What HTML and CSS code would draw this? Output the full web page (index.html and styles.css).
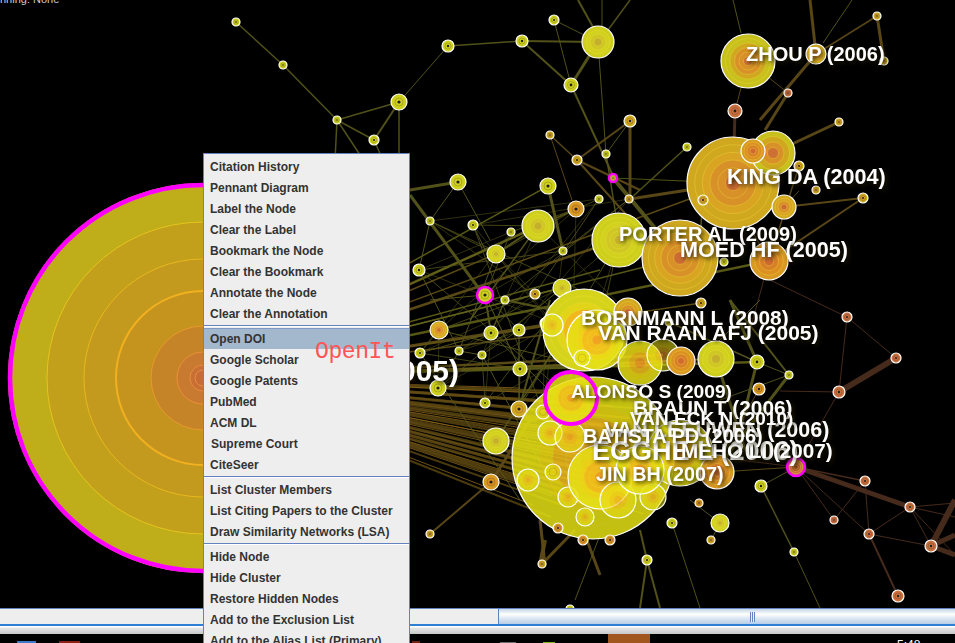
FILE: index.html
```html
<!DOCTYPE html>
<html lang="en">
<head>
    <meta charset="UTF-8">
    <title>CiteSpace network</title>
    <link rel="stylesheet" href="styles.css">
</head>
<body>
    <div id="view">
        <svg id="graph" width="955" height="608" viewBox="0 0 955 608"></svg>
        <div id="menu">
            <div class="item">Citation History</div>
            <div class="item">Pennant Diagram</div>
            <div class="item">Label the Node</div>
            <div class="item">Clear the Label</div>
            <div class="item">Bookmark the Node</div>
            <div class="item">Clear the Bookmark</div>
            <div class="item">Annotate the Node</div>
            <div class="item">Clear the Annotation</div>
            <div class="sep"></div>
            <div class="item selected">Open DOI</div>
            <div class="item">Google Scholar</div>
            <div class="item">Google Patents</div>
            <div class="item">PubMed</div>
            <div class="item">ACM DL</div>
            <div class="item indent">Supreme Court</div>
            <div class="item">CiteSeer</div>
            <div class="sep"></div>
            <div class="item">List Cluster Members</div>
            <div class="item">List Citing Papers to the Cluster</div>
            <div class="item">Draw Similarity Networks (LSA)</div>
            <div class="sep"></div>
            <div class="item">Hide Node</div>
            <div class="item">Hide Cluster</div>
            <div class="item">Restore Hidden Nodes</div>
            <div class="item">Add to the Exclusion List</div>
            <div class="item">Add to the Alias List (Primary)</div>
        </div>
        <div id="note">OpenIt</div>
    </div>
    <div id="scrollbar">
        <div id="track"></div>
        <div id="thumb"><div id="grip"></div></div>
    </div>
    <div id="frame"></div>
    <div id="taskbar">
        <span class="task blue"></span>
        <span class="task red"></span>
        <span class="task dimred"></span>
        <span class="task grey"></span>
        <span class="task green"></span>
        <span class="task active"></span>
        <span id="clock">5:48</span>
    </div>
    <script src="graph.js"></script>
</body>
</html>
```

FILE: styles.css
```css
html, body {
    margin: 0;
    width: 955px;
    height: 643px;
    overflow: hidden;
    background-color: #000;
}
#view {
    position: relative;
    width: 955px;
    height: 608px;
    background-color: #000;
}
#graph {
    display: block;
}
.nodetext {
    font-family: "Liberation Sans", Arial, sans-serif;
    font-weight: bold;
    fill: #fff;
    filter: drop-shadow(2px 2px 2px rgba(30, 26, 0, 0.85));
}
.pruning {
    font-family: "Liberation Sans", Arial, sans-serif;
    font-size: 11px;
    fill: #ccc;
}
#menu {
    position: absolute;
    left: 203px;
    top: 153px;
    width: 205px;
    height: 500px;
    padding-top: 2px;
    background-color: #eee;
    border: 1px solid #6382bf;
    font-family: "Liberation Sans", Arial, sans-serif;
    font-size: 12px;
    font-weight: bold;
    color: #333;
}
.item {
    height: 21px;
    line-height: 23px;
    padding-left: 6px;
    white-space: nowrap;
}
.indent {
    padding-left: 7px;
}
.selected {
    background-color: #a3b8cc;
    box-shadow: inset 0 1px 0 #7f9ac4;
}
.sep {
    height: 1px;
    margin: 1px 0;
    background-color: #6382bf;
    border-bottom: 1px solid #fff;
}
#note {
    position: absolute;
    left: 315px;
    top: 338px;
    font-family: "Liberation Mono", monospace;
    font-size: 23px;
    letter-spacing: -0.4px;
    line-height: 28px;
    color: #f55;
}
#scrollbar {
    display: flex;
    height: 15px;
    border-top: 1px solid #6382bf;
    background-color: #eee;
}
#track {
    width: 498px;
    border-right: 1px solid #6382bf;
}
#thumb {
    flex: 1;
    display: flex;
    align-items: center;
    padding-left: 251px;
    background: linear-gradient(#c4d5e8, #fff 35%, #dfe9f4 60%, #b8cde4);
}
#grip {
    width: 5px;
    height: 10px;
    background: repeating-linear-gradient(90deg, #6382bf 0 1px, #eef3f9 1px 2px);
}
#frame {
    height: 8px;
    border-top: 2px solid #2f7fd6;
    background: linear-gradient(#fff 1px, #e6e6e6 2px, #c8c8c8);
}
#taskbar {
    display: flex;
    height: 9px;
    overflow: hidden;
    background-color: #000;
}
.task {
    height: 2px;
    margin-top: 7px;
}
.blue {
    width: 19px;
    margin-left: 17px;
    background-color: #3d78c4;
}
.red {
    width: 21px;
    margin-left: 23px;
    background-color: #8a2018;
}
.dimred {
    width: 8px;
    margin-left: 332px;
    background-color: #6a2410;
}
.grey {
    width: 16px;
    margin-left: 80px;
    background-color: #6e6e6e;
    margin-top: 8px;
}
.green {
    width: 12px;
    margin-left: 27px;
    background-color: #7cb820;
    margin-top: 8px;
}
.active {
    width: 42px;
    height: 9px;
    margin: 0 0 0 53px;
    background-color: #a0561c;
}
#clock {
    margin-left: 247px;
    margin-top: 5px;
    font-family: "Liberation Sans", Arial, sans-serif;
    font-size: 12px;
    line-height: 12px;
    color: #fff;
}
```

FILE: graph.js
```js
const NS = 'http://www.w3.org/2000/svg';
const svg = document.querySelector('#graph');

const palettes = {
    lime: ['#cdcf1c', '#d2d21e', '#cfc824', '#c4b02a'],
    limeor: ['#c8c01c', '#d0a820', '#d89028', '#cc7034'],
    gold: ['#d0a820', '#d8a422', '#d89028', '#cc6c34'],
    orange: ['#d89a22', '#dc9022', '#d88028', '#d06a30'],
    red: ['#c96f3c', '#cc7040', '#b85c30', '#a04c28'],
    bright: ['#e6e214', '#eedc14', '#f4c01c', '#f4a024'],
    yelor: ['#d6d41a', '#e2d418', '#f0b81c', '#f09a28']
};

// x, y, r, palette, magenta ring
const nodes = [
    [236,22,4,'lime'],[283,65,4,'lime'],[337,120,4,'lime'],[374,140,5,'lime'],[399,102,8,'lime'],
    [448,46,6,'lime'],[522,41,6,'lime'],[554,20,5,'lime'],[571,85,7,'lime'],[598,42,16,'lime'],
    [550,135,4,'gold'],[577,160,5,'gold'],[606,154,4,'lime'],[630,121,6,'gold'],[613,178,4,'lime',1],
    [458,182,8,'lime'],[430,221,4,'lime'],[473,225,5,'lime'],[419,270,6,'lime'],[496,254,9,'lime'],
    [548,186,8,'lime'],[538,226,16,'lime'],[563,251,4,'lime'],[576,209,8,'orange'],[599,199,4,'lime'],
    [629,199,4,'gold'],[511,232,4,'lime'],[535,294,5,'gold'],[505,300,4,'lime'],
    [485,295,8,'lime',1],[439,330,9,'gold'],[491,333,7,'lime'],[519,330,6,'lime'],[420,353,5,'lime'],
    [459,351,4,'lime'],[482,355,4,'lime'],[520,369,7,'lime'],[438,388,8,'lime'],[485,403,5,'lime'],
    [519,409,8,'gold'],[496,441,13,'lime'],[491,482,8,'orange'],[430,534,4,'gold'],
    [562,288,9,'lime'],[545,323,5,'lime'],
    [619,240,27,'lime'],[680,258,38,'gold'],[769,261,19,'orange'],[733,183,46,'gold'],
    [773,153,22,'limeor'],[753,151,12,'orange'],[784,207,12,'gold'],[748,61,27,'limeor'],[816,54,10,'gold'],[884,61,4,'gold'],
    [877,16,4,'gold'],[735,111,7,'red'],[788,93,4,'red'],[839,122,4,'gold'],[799,166,5,'gold'],
    [816,190,4,'gold'],[863,198,5,'gold'],[703,200,5,'gold'],[687,147,4,'lime'],[724,262,4,'lime'],
    [584,330,41,'yelor'],[552,325,11,'bright'],[597,340,30,'bright'],[582,358,8,'bright'],
    [628,312,14,'gold'],[669,322,4,'lime'],[701,303,5,'gold'],[640,363,22,'bright'],[663,355,16,'bright'],
    [681,361,14,'orange'],[716,359,18,'lime'],[757,362,7,'lime'],[789,375,4,'lime'],[759,389,6,'orange'],
    [593,458,81,'bright'],[550,433,12,'bright'],[543,412,7,'bright'],[570,437,15,'bright'],
    [553,472,8,'bright'],[528,480,11,'bright'],[568,497,10,'bright'],[585,517,9,'bright'],
    [558,528,5,'orange'],[610,540,5,'orange'],[583,540,5,'orange'],[600,477,32,'bright'],
    [618,500,18,'bright'],[653,497,13,'bright'],[680,453,33,'bright'],[640,470,24,'bright'],
    [717,472,17,'orange'],[761,486,6,'lime'],[720,523,9,'lime'],[699,503,4,'orange'],
    [672,523,5,'lime'],[711,540,4,'gold'],[647,560,5,'lime'],[542,564,4,'gold'],[570,609,4,'lime'],
    [796,467,9,'red',1],[839,392,6,'red'],[847,317,5,'red'],[896,358,5,'red'],[865,481,5,'red'],
    [834,520,4,'red'],[869,534,5,'red'],[910,507,5,'red'],[931,546,6,'red'],[898,596,6,'red'],[794,552,4,'lime'],
    [571,398,26,'bright',2]
];

// x1, y1, x2, y2, width, tier
const edges = [
    [236,22,283,65,1.5,0],[283,65,337,120,1.5,0],[337,120,399,102,1.5,0],[337,120,374,140,1.5,0],
    [374,140,399,102,2,0],[399,102,399,170,1.5,0],[337,120,335,160,1.5,0],[337,120,370,170,1.5,0],[374,140,385,165,1.5,0],
    [399,102,448,46,1,0],[448,46,522,41,1.5,0],[522,41,598,42,2,0],[522,41,571,85,2,0],[598,42,571,85,3,0],
    [554,20,598,42,1,0],[554,20,571,85,1,0],[571,85,614,178,2,0],[578,0,593,27,2,0],[598,42,606,154,1,0],
    [602,0,602,27,1,0],[630,0,608,30,1.5,0],[410,190,458,182,3,0],[458,182,430,221,1,0],[458,182,490,240,1,0],[410,195,480,290,3,0],
    [430,221,419,270,1,0],[473,225,490,260,1,0],[538,226,496,254,2,0],[538,226,470,320,1.5,0],[548,186,563,251,3,0],
    [550,135,577,160,1.5,1],[550,135,572,200,1,1],[577,160,640,190,2,1],[630,121,577,160,2,1],[630,121,630,199,3,1],
    [606,154,630,121,1,0],[613,178,680,258,4,0],[606,154,620,240,1.5,0],[577,160,640,230,2,1],[687,147,630,199,1.5,0],
    [733,183,630,199,3,1],[733,183,613,178,1,0],[735,111,733,183,3,2],[748,61,735,111,1,1],[748,61,788,93,1,1],
    [788,93,765,130,3,1],[816,54,760,120,3,1],[816,54,810,0,3,1],[816,54,877,16,1.5,1],[877,16,884,61,3,1],
    [823,43,852,0,1,0],[733,0,741,33,1,0],[773,153,839,122,3,1],[703,200,698,262,1.5,0],[784,207,863,198,2,1],[769,261,863,198,2,1],
    [769,261,799,166,1.5,1],[799,191,784,207,1,1],[769,261,720,175,1,1],[733,183,700,262,1,1],[769,261,750,330,1,2],
    [420,353,491,333,1,0],[439,330,560,360,1,0],[491,333,505,300,1,0],[485,295,491,333,2,0],[485,295,430,300,1,0],
    [485,295,520,369,1,0],[505,300,600,320,2,0],[419,270,459,351,1,0],[496,254,459,351,1,0],[459,351,482,355,1,0],
    [482,355,560,500,1,0],[420,353,520,500,1,0],[491,333,600,440,1,0],[519,330,519,409,1,0],[520,369,640,363,1,0],
    [430,534,491,482,2,1],[491,482,530,420,3,1],[496,441,560,340,1.5,0],[519,409,550,300,2,0],[545,540,540,565,4,1],
    [575,530,542,564,3,1],[585,535,600,575,3,1],[540,520,545,565,3,1],[600,535,575,600,1,0],[640,530,647,560,2,0],[647,560,640,608,2,0],[647,560,660,608,2,0],
    [672,523,700,608,1,0],[720,523,690,500,1,0],[720,523,711,540,1,0],[761,486,794,552,1.5,0],[794,552,820,608,1,0],
    [761,486,796,467,1,0],[720,472,796,467,1,1],[716,359,745,450,3,0],[757,362,789,375,1,0],[757,362,740,430,3,0],
    [789,375,716,470,3,0],[789,375,720,400,1,0],[759,389,715,470,1,1],[730,300,757,362,3,0],[730,300,789,375,2,0],
    [669,322,757,362,1.5,0],[760,300,700,360,1,0],
    [796,467,839,392,1,2],[839,392,847,317,1,2],[847,317,896,358,1,2],[839,392,896,358,6,2],[770,280,847,317,1,2],
    [780,391,839,392,1,2],[796,467,865,481,1.5,2],[796,467,910,507,5,2],[796,467,834,520,1,2],[796,467,869,534,1,2],
    [865,481,834,520,1,2],[865,481,869,534,1,2],[869,534,910,507,1,2],[869,534,931,546,1,2],[869,534,898,596,2,2],
    [910,507,931,546,1,2],[910,507,955,503,1,2],[910,507,955,517,1,2],[910,507,955,555,1,2],
    [931,546,955,500,6,2],[931,546,955,535,5,2],[931,546,955,555,5,2],[740,460,796,467,1,2]
];

const tiers = ['#55551a', '#5e4a18', '#4a2c1c'];

function add(name, attrs, parent){
    let el = document.createElementNS(NS, name);
    for(let k in attrs){
        el.setAttribute(k, attrs[k]);
    }
    (parent || svg).appendChild(el);
    return el;
}

function line(x1, y1, x2, y2, w, color, op){
    add('line', {x1: x1, y1: y1, x2: x2, y2: y2, stroke: color, 'stroke-width': w, 'stroke-opacity': op});
}

function drawNode(n, op){
    let [x, y, r, pal, ring] = n;
    let cols = palettes[pal];
    let g = add('g', {opacity: op});
    add('circle', {cx: x, cy: y, r: r, fill: cols[0]}, g);
    if(r >= 9){
        let steps = r > 25 ? 6 : 4;
        for(let i = 1; i < steps; i++){
            let c = cols[Math.min(3, Math.floor(i * 4 / steps))];
            add('circle', {cx: x, cy: y, r: r * (1 - i / steps), fill: c, stroke: '#f0e040', 'stroke-width': 1, 'stroke-opacity': 0.35}, g);
        }
    } else {
        add('circle', {cx: x, cy: y, r: r * 0.5, fill: cols[1], stroke: '#222', 'stroke-width': 0.6, 'stroke-opacity': 0.4}, g);
        if(pal != 'bright'){
            add('circle', {cx: x, cy: y, r: Math.max(0.8, r * 0.2), fill: '#222'}, g);
        }
    }
    if(ring == 1){
        add('circle', {cx: x, cy: y, r: r, fill: 'none', stroke: '#f0f', 'stroke-width': 2.5});
    } else if(ring == 2){
        add('circle', {cx: x, cy: y, r: r, fill: 'none', stroke: '#f0f', 'stroke-width': 4});
    } else {
        add('circle', {cx: x, cy: y, r: r, fill: 'none', stroke: '#fff', 'stroke-width': 1.2});
    }
}

function drawHub(){
    // the huge node whose label sits behind the menu
    let rings = [
        [195,'#bfae1a','none',0],[156,'#c3a01c','#e6c41e',1],[119,'#c49a1e','#e8b81e',1],
        [87,'#c5941f','#f0b020',2],[52,'#c68428','#e89a2c',1],[26,'#c87a30','#ea9038',1],
        [13,'#c87034','#e88a40',1],[8,'#c86c36','#e88a40',1]
    ];
    for(let [r, fill, stroke, w] of rings){
        add('circle', {cx: 203, cy: 378, r: r, fill: fill, stroke: stroke, 'stroke-width': w});
    }
    add('circle', {cx: 203, cy: 378, r: 193, fill: 'none', stroke: '#f0f', 'stroke-width': 4.5});
}

const hubOlive = [
    [619,240],[680,258],[733,183],[769,261],[584,330],[640,363],[663,355],[716,359],[576,209],
    [538,226],[496,254],[548,186],[628,312],[562,288],[681,361],[757,362],[701,303],[600,270]
];

// dense band of citation links running from the hub into the big cluster
for(let i = 0; i < 44; i++){
    let x = 520 + (i * 37) % 130;
    let y = 388 + i * 3;
    line(203, 378, x, y, 1 + (i * 7) % 3, i % 3 == 0 ? '#8a6418' : '#5e4812', 0.8);
}
for(let i = 0; i < hubOlive.length; i++){
    let t = hubOlive[i];
    line(203, 378, t[0], t[1], i % 3 == 0 ? 2.5 : 1.5, i % 2 ? '#66661a' : '#6a5618', 0.85);
}
// thin mesh between the small nodes left of the cluster
let mesh = nodes.filter(n => n[0] > 410 && n[0] < 640 && n[1] > 190 && n[1] < 420);
for(let i = 0; i < mesh.length; i++){
    let a = mesh[i], b = mesh[(i + 3) % mesh.length], c = mesh[(i + 7) % mesh.length];
    line(a[0], a[1], b[0], b[1], 1, '#55551a', 0.8);
    line(a[0], a[1], c[0], c[1], 0.8, '#55551a', 0.7);
}
for(let e of edges){
    line(e[0], e[1], e[2], e[3], e[4], tiers[e[5]], 0.95);
}

drawHub();
for(let n of nodes){
    let op = 1;
    if(n[3] == 'bright'){
        op = n[2] >= 20 ? 0.85 : 0.55;
    }
    drawNode(n, op);
}

let pruning = add('text', {x: 0, y: 3, class: 'pruning'});
pruning.textContent = 'nning: None';

// x, baseline, font size, text
const labels = [
    [459,381,30,'HIRSCH JE (2005)','end'],
    [592,460,27,'EGGHE L (2006)'],
    [604,437,21.5,'VAN LEEUWEN (2006)'],
    [633,415,20.8,'BRAUN T (2006)'],
    [681,458,20.7,'MEHO LI (2007)'],
    [630,425,19,'VAN ECK N (2010)'],
    [583,443,20,'BATISTA PD (2006)'],
    [596,481,19.8,'JIN BH (2007)'],
    [571,398,19.2,'ALONSO S (2009)'],
    [581,325,20.8,'BORNMANN L (2008)'],
    [598,340,21,'VAN RAAN AFJ (2005)'],
    [619,241,20,'PORTER AL (2009)'],
    [680,257,21.6,'MOED HF (2005)'],
    [727,184,21.6,'KING DA (2004)'],
    [746,61,20,'ZHOU P (2006)']
];
for(let [x, y, size, text, anchor] of labels){
    let t = add('text', {x: x, y: y, 'font-size': size, 'text-anchor': anchor || 'start', class: 'nodetext'});
    t.textContent = text;
}
```
